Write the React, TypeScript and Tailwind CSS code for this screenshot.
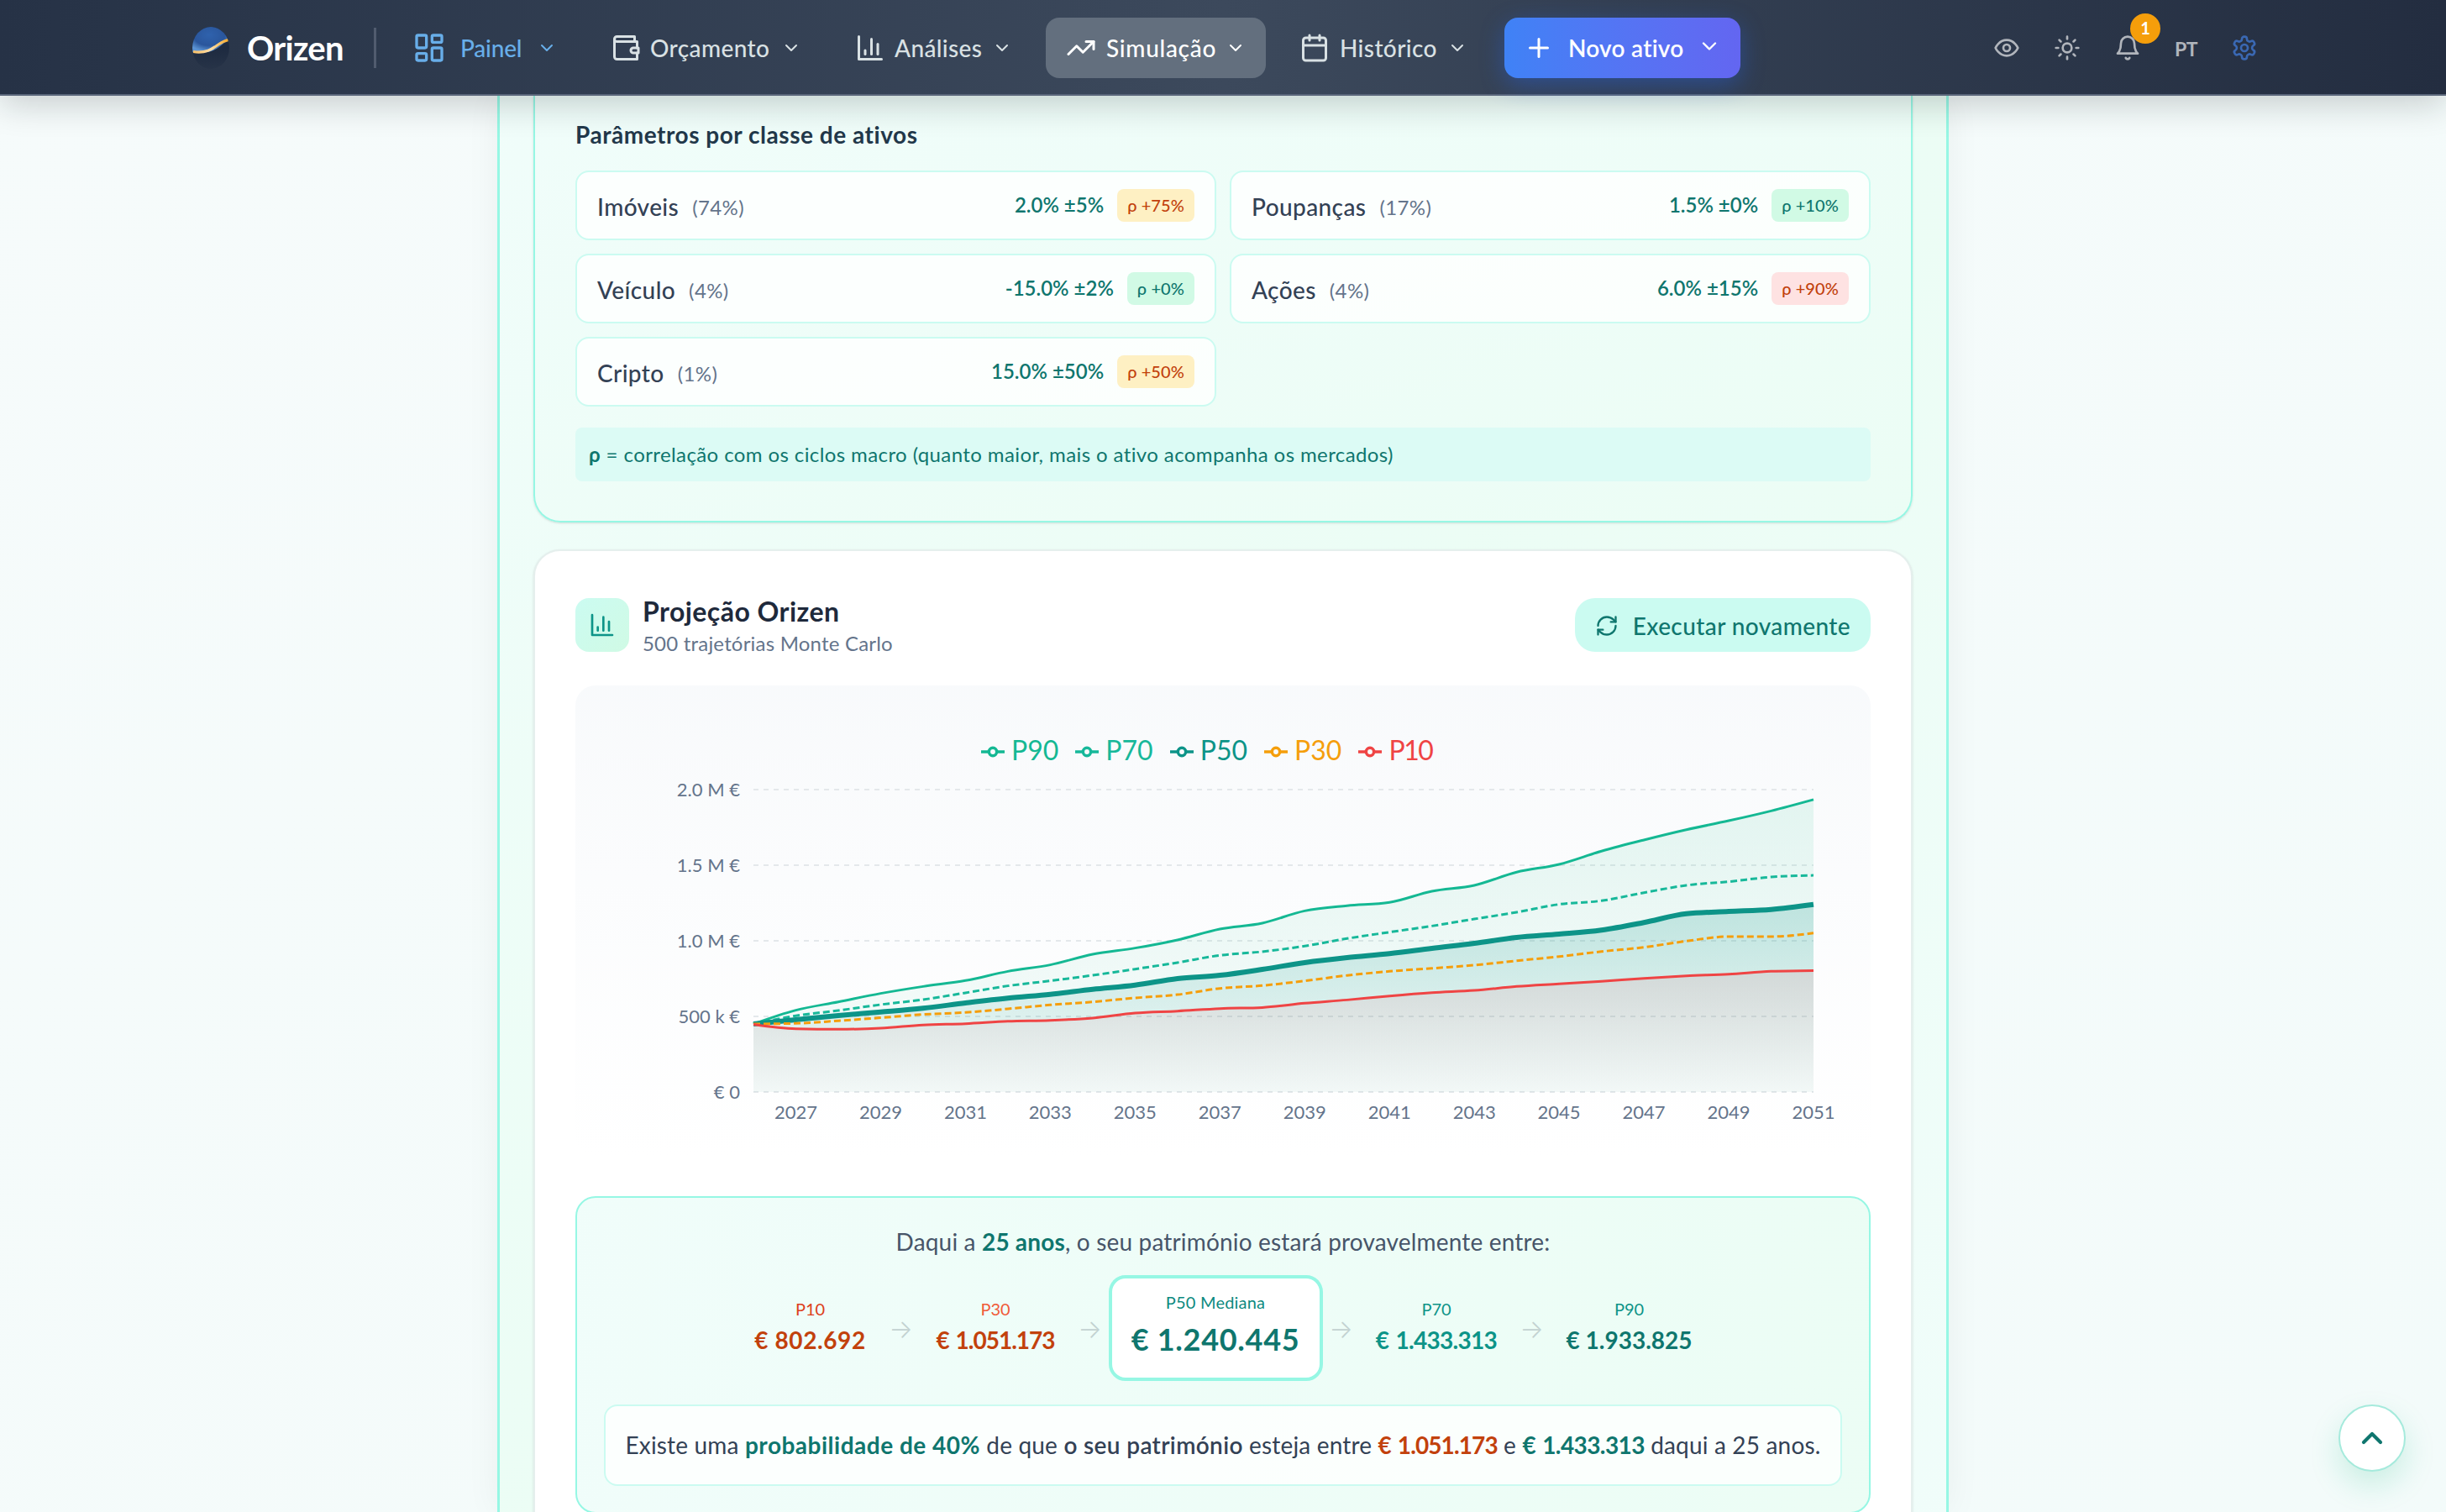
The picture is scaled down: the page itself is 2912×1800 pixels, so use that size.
import type { ReactNode } from 'react';
import { Calendar, ChevronDown, ChevronUp, LayoutDashboard, Plus, RefreshCw, Sun, TrendingUp } from 'lucide-react';

const YEARS = 25;
const PLOT = { left: 212, right: 1474, top: 20, bottom: 380 };

// Values in thousands of euros, one per year from 2026 to 2051
const SERIES = {
  p90: [450, 541, 596, 652, 698, 737, 798, 841, 911, 952, 1006, 1078, 1117, 1198, 1232, 1254, 1328, 1367, 1454, 1506, 1593, 1667, 1735, 1794, 1859, 1934],
  p70: [450, 504, 539, 578, 611, 656, 702, 735, 772, 813, 856, 904, 928, 965, 1015, 1057, 1098, 1144, 1189, 1241, 1265, 1318, 1367, 1391, 1422, 1433],
  p50: [450, 478, 506, 529, 554, 589, 621, 646, 679, 707, 750, 772, 811, 856, 889, 915, 950, 983, 1022, 1044, 1071, 1121, 1179, 1194, 1207, 1240],
  p30: [450, 454, 471, 491, 513, 526, 550, 576, 596, 622, 644, 685, 704, 735, 771, 798, 818, 839, 868, 896, 929, 957, 998, 1028, 1028, 1051],
  p10: [447, 418, 415, 422, 443, 452, 468, 474, 489, 522, 535, 552, 559, 587, 609, 635, 657, 672, 698, 715, 732, 752, 768, 779, 798, 803],
};

const LEGEND = [
  { label: 'P90', color: '#14b893' },
  { label: 'P70', color: '#17b89a' },
  { label: 'P50', color: '#0d9488' },
  { label: 'P30', color: '#f59e0b' },
  { label: 'P10', color: '#ef4444' },
];

const ASSETS = [
  { name: 'Imóveis', share: '74%', ret: '2.0% ±5%', rho: '+75%', tone: 'mid' },
  { name: 'Poupanças', share: '17%', ret: '1.5% ±0%', rho: '+10%', tone: 'low' },
  { name: 'Veículo', share: '4%', ret: '-15.0% ±2%', rho: '+0%', tone: 'low' },
  { name: 'Ações', share: '4%', ret: '6.0% ±15%', rho: '+90%', tone: 'high' },
  { name: 'Cripto', share: '1%', ret: '15.0% ±50%', rho: '+50%', tone: 'mid' },
];

const TONES: Record<string, string> = {
  low: 'bg-[#d1fae5] text-[#0f766e]',
  mid: 'bg-[#fef0c3] text-[#c2410c]',
  high: 'bg-[#fee2e2] text-[#c2410c]',
};

const px = (i: number) => PLOT.left + ((PLOT.right - PLOT.left) / YEARS) * i;
const py = (v: number) => PLOT.bottom - v * 0.18;

// Monotone cubic interpolation, tangents limited so the curve never overshoots
function curve(values: number[]) {
  const p = values.map((v, i) => [px(i), py(v)]);
  const h = p[1][0] - p[0][0];
  const s = p.slice(1).map((q, i) => (q[1] - p[i][1]) / h);
  const t = p.map((_, i) => {
    if (i === 0 || i === p.length - 1) return 0;
    const a = s[i - 1];
    const b = s[i];
    return (Math.sign(a) + Math.sign(b)) * Math.min(Math.abs(a), Math.abs(b), Math.abs(a + b) / 4) || 0;
  });
  t[0] = (3 * s[0] - t[1]) / 2;
  t[p.length - 1] = (3 * s[s.length - 1] - t[p.length - 2]) / 2;
  let d = `M${p[0][0]},${p[0][1]}`;
  for (let i = 1; i < p.length; i++) {
    d += `C${p[i - 1][0] + h / 3},${p[i - 1][1] + (t[i - 1] * h) / 3} ${p[i][0] - h / 3},${p[i][1] - (t[i] * h) / 3} ${p[i][0]},${p[i][1]}`;
  }
  return d;
}

const area = (values: number[]) => `${curve(values)}L${PLOT.right},${PLOT.bottom}L${PLOT.left},${PLOT.bottom}Z`;

function Icon({ className, children }: { className?: string; children: ReactNode }) {
  return (
    <svg viewBox="0 0 24 24" fill="none" stroke="currentColor" strokeWidth={2} strokeLinecap="round" strokeLinejoin="round" className={className}>
      {children}
    </svg>
  );
}

function BarsIcon({ className }: { className?: string }) {
  return (
    <Icon className={className}>
      <path d="M3 3v18h18" />
      <path d="M18 17V9" />
      <path d="M13 17V5" />
      <path d="M8 17v-3" />
    </Icon>
  );
}

function WalletIcon({ className }: { className?: string }) {
  return (
    <Icon className={className}>
      <path d="M21 12V7H5a2 2 0 0 1 0-4h14v4" />
      <path d="M3 5v14a2 2 0 0 0 2 2h16v-5" />
      <path d="M18 12a2 2 0 0 0 0 4h4v-4Z" />
    </Icon>
  );
}

function Logo() {
  return (
    <svg viewBox="0 0 48 54" className="h-[54px] w-12">
      <defs>
        <radialGradient id="sky" cx="0.5" cy="0.35" r="0.6">
          <stop offset="0" stopColor="#2f62ad" />
          <stop offset="0.65" stopColor="#2a569c" />
          <stop offset="1" stopColor="#5b93d3" />
        </radialGradient>
        <linearGradient id="sea" x1="0" y1="0" x2="0" y2="1">
          <stop offset="0.5" stopColor="#1d2a40" />
          <stop offset="1" stopColor="#1d2a40" stopOpacity="0.15" />
        </linearGradient>
        <linearGradient id="dawn" x1="0" y1="0" x2="1" y2="0">
          <stop offset="0" stopColor="#f9c067" />
          <stop offset="0.5" stopColor="#fddca6" />
          <stop offset="1" stopColor="#f5a623" />
        </linearGradient>
        <clipPath id="globe"><ellipse cx="26" cy="27" rx="22" ry="25" /></clipPath>
      </defs>
      <g clipPath="url(#globe)">
        <rect width="48" height="54" fill="url(#sea)" />
        <path d="M0 0H48V17C40 21 35 30 22 32C14 33.500 8 33 0 31Z" fill="url(#sky)" />
        <path d="M5 31.500C20 34 28 28 35 23C40 19.500 43 18 48 17" fill="none" stroke="url(#dawn)" strokeWidth="3.200" />
      </g>
    </svg>
  );
}

function NavItem({ icon, label, className }: { icon: ReactNode; label: string; className: string }) {
  return (
    <button className={`flex h-[72px] items-center rounded-2xl px-6 text-[28px] font-medium ${className}`}>
      {icon}
      <span className="flex-1 text-left whitespace-nowrap">{label}</span>
      <ChevronDown className="size-6" />
    </button>
  );
}

function Header() {
  return (
    <header className="relative z-10 flex h-[114px] items-center border-b-2 border-[#5a667a] bg-linear-to-r from-[#263246] via-[#3c495c] to-[#232d40] pt-0.5 pr-[208px] pl-[225px] shadow-[0_10px_40px_rgba(15,23,32,0.2)]">
      <Logo />
      <span className="ml-[21px] w-[115px] text-[40px] font-bold tracking-[-0.7px] text-white">Orizen</span>
      <div className="ml-9 h-12 w-[3px] bg-[#515c6f]" />
      <nav className="ml-[19px] flex items-center">
        <NavItem icon={<LayoutDashboard className="mr-[17px] size-10" />} label="Painel" className="w-[220px] tracking-[-0.2px] text-[#68aee9]" />
        <NavItem icon={<WalletIcon className="mr-[11px] size-9" />} label="Orçamento" className="ml-4 w-[275px] tracking-[0.4px] text-[#d9e1e4]" />
        <NavItem icon={<BarsIcon className="mr-[11px] size-9" />} label="Análises" className="ml-4 w-[235px] tracking-[0.35px] text-[#d9e1e4]" />
        <NavItem icon={<TrendingUp className="mr-3 size-9" />} label="Simulação" className="ml-4 w-[262px] bg-[#636f7e] tracking-[0.7px] text-white" />
        <NavItem icon={<Calendar className="mr-3 size-9" />} label="Histórico" className="ml-4 w-[248px] tracking-[0.4px] text-[#d9e1e4]" />
      </nav>
      <button className="ml-5 flex h-[72px] w-[281px] items-center rounded-2xl bg-linear-to-r from-[#3f82f6] to-[#6366f1] px-[23px] text-[28px] font-semibold tracking-[0.25px] text-white shadow-[0_8px_28px_rgba(37,99,235,0.4)]">
        <Plus className="mr-[17px] size-9" />
        <span className="flex-1 text-left whitespace-nowrap">Novo ativo</span>
        <ChevronDown className="mb-1 size-7" />
      </button>
      <div className="ml-auto flex items-center gap-2 text-[#b1b5bc]">
        <button className="flex size-16 items-center justify-center">
          <Icon className="size-8">
            <path d="M2 12s3-7 10-7 10 7 10 7-3 7-10 7-10-7-10-7Z" />
            <circle cx="12" cy="12" r="3" />
          </Icon>
        </button>
        <button className="flex size-16 items-center justify-center"><Sun className="size-8" /></button>
        <button className="relative flex size-16 items-center justify-center">
          <Icon className="size-8">
            <path d="M6 8a6 6 0 0 1 12 0c0 7 3 9 3 9H3s3-2 3-9" />
            <path d="M10.300 21a1.940 1.940 0 0 0 3.400 0" />
          </Icon>
          <span className="absolute -top-[9px] left-[35px] flex size-9 items-center justify-center rounded-full bg-[#f59e0b] pb-0.5 text-[20px] font-bold text-white">1</span>
        </button>
        <button className="flex h-16 w-[59px] items-center justify-center pt-0.5 text-[23px] font-bold tracking-[-0.5px]">PT</button>
        <button className="flex size-16 items-center justify-center text-[#3a68b3]">
          <Icon className="size-8">
            <path d="M12.220 2h-.440a2 2 0 0 0-2 2v.180a2 2 0 0 1-1 1.730l-.430.250a2 2 0 0 1-2 0l-.150-.080a2 2 0 0 0-2.730.730l-.220.380a2 2 0 0 0 .730 2.730l.150.100a2 2 0 0 1 1 1.720v.510a2 2 0 0 1-1 1.740l-.150.090a2 2 0 0 0-.730 2.730l.220.380a2 2 0 0 0 2.730.730l.150-.080a2 2 0 0 1 2 0l.430.250a2 2 0 0 1 1 1.730V20a2 2 0 0 0 2 2h.440a2 2 0 0 0 2-2v-.180a2 2 0 0 1 1-1.730l.430-.250a2 2 0 0 1 2 0l.150.080a2 2 0 0 0 2.730-.730l.220-.390a2 2 0 0 0-.730-2.730l-.150-.080a2 2 0 0 1-1-1.740v-.500a2 2 0 0 1 1-1.740l.150-.090a2 2 0 0 0 .730-2.730l-.220-.380a2 2 0 0 0-2.730-.730l-.150.080a2 2 0 0 1-2 0l-.430-.250a2 2 0 0 1-1-1.730V4a2 2 0 0 0-2-2z" />
            <circle cx="12" cy="12" r="3" />
          </Icon>
        </button>
      </div>
    </header>
  );
}

function AssetParams() {
  return (
    <section className="h-[508px] rounded-b-[32px] border-2 border-t-0 border-teal-200 bg-linear-to-br from-teal-50 to-emerald-50 px-12 pt-[26px] shadow-sm">
      <h3 className="h-10 text-[28px] leading-10 font-bold tracking-[0.53px] text-[#22384a]">Parâmetros por classe de ativos</h3>
      <div className="mt-[23px] grid grid-cols-2 gap-4">
        {ASSETS.map(a => (
          <div key={a.name} className="flex h-[83px] items-center rounded-2xl border-2 border-teal-100 bg-white/80 px-6">
            <span className="mt-0.5 text-[28px] font-medium tracking-[0.4px] text-[#334155]">{a.name}</span>
            <span className="mt-1 ml-4 text-[24px] tracking-[0.4px] text-[#64748b]">({a.share})</span>
            <span className="ml-auto pb-0.5 text-[24px] font-semibold text-[#0f766e]">{a.ret}</span>
            <span className={`ml-4 flex h-[39px] items-center rounded-lg px-3 pb-0.5 text-[20px] font-medium tracking-[0.1px] ${TONES[a.tone]}`}>ρ {a.rho}</span>
          </div>
        ))}
      </div>
      <p className="mt-[25px] flex h-16 items-center rounded-lg bg-[#dcfbf5] px-4 text-[24px] tracking-[0.4px] whitespace-pre text-[#0f766e]">
        <strong>ρ</strong> = correlação com os ciclos macro (quanto maior, mais o ativo acompanha os mercados)
      </p>
    </section>
  );
}

function ProjectionChart() {
  return (
    <div className="mt-8 h-[560px] rounded-3xl bg-linear-to-b from-slate-50 to-white">
      <div className="flex h-[104px] items-end gap-5 pl-[483px] text-[32px] leading-[54px]">
        {LEGEND.map(l => (
          <div key={l.label} className="flex items-center gap-2" style={{ color: l.color }}>
            <svg viewBox="0 0 32 32" className="mt-1 size-7" fill="none" stroke="currentColor" strokeWidth={4}>
              <path d="M0,16h10.667A5.333,5.333,0,1,1,21.333,16H32M21.333,16A5.333,5.333,0,1,1,10.667,16" />
            </svg>
            <span className={l.label === 'P10' ? 'tracking-[-1.400px]' : ''}>{l.label}</span>
          </div>
        ))}
      </div>
      <svg viewBox="0 0 1542 440" className="h-[440px] w-full" fontFamily="Lato, sans-serif" fontSize="22">
        <defs>
          <linearGradient id="g90" x1="0" y1="0" x2="0" y2="1">
            <stop offset="0" stopColor="#10b981" stopOpacity="0.1" />
            <stop offset="1" stopColor="#10b981" stopOpacity="0.02" />
          </linearGradient>
          <linearGradient id="g50" x1="0" y1="0" x2="0" y2="1">
            <stop offset="0" stopColor="#0d9488" stopOpacity="0.2" />
            <stop offset="1" stopColor="#0d9488" stopOpacity="0.03" />
          </linearGradient>
          <linearGradient id="g10" x1="0" y1="0" x2="0" y2="1">
            <stop offset="0" stopColor="#e8445a" stopOpacity="0.11" />
            <stop offset="1" stopColor="#e8445a" stopOpacity="0.01" />
          </linearGradient>
        </defs>
        {['2.0 M €', '1.5 M €', '1.0 M €', '500 k €', '€ 0'].map((label, i) => (
          <g key={label}>
            <line x1={PLOT.left} x2={PLOT.right} y1={20 + i * 90} y2={20 + i * 90} stroke="#e4e8eb" strokeWidth="2" strokeDasharray="6 6" />
            <text x="196" y={28 + i * 90} textAnchor="end" fill="#64748b">{label}</text>
          </g>
        ))}
        <path d={area(SERIES.p90)} fill="url(#g90)" />
        <path d={area(SERIES.p50)} fill="url(#g50)" />
        <path d={area(SERIES.p10)} fill="url(#g10)" />
        <g fill="none">
          <path d={curve(SERIES.p90)} stroke="#14b893" strokeWidth="3" />
          <path d={curve(SERIES.p70)} stroke="#17b89a" strokeWidth="3" strokeDasharray="8 4" />
          <path d={curve(SERIES.p50)} stroke="#0d9488" strokeWidth="6" />
          <path d={curve(SERIES.p30)} stroke="#f59e0b" strokeWidth="3" strokeDasharray="8 4" />
          <path d={curve(SERIES.p10)} stroke="#ef4444" strokeWidth="3" />
        </g>
        {Array.from({ length: 13 }, (_, i) => (
          <text key={i} x={px(1 + i * 2)} y="412" textAnchor="middle" fill="#64748b">{2027 + i * 2}</text>
        ))}
      </svg>
    </div>
  );
}

function Percentile({ label, value, labelClass, valueClass }: { label: string; value: string; labelClass: string; valueClass: string }) {
  return (
    <div className="pb-[3px] text-center whitespace-nowrap">
      <div className={`text-[20px] leading-7 ${labelClass}`}>{label}</div>
      <div className={`mt-[3px] text-[28px] leading-10 font-bold ${valueClass}`}>{value}</div>
    </div>
  );
}

function Arrow() {
  return <span className="flex w-6 justify-center pt-0.5 font-['Inter'] text-[30px] leading-none font-light text-[#c3d2d1]">→</span>;
}

function Summary() {
  return (
    <div className="mt-12 h-[378px] rounded-3xl border-2 border-teal-200 bg-linear-to-r from-teal-50 to-emerald-50 px-8 pt-8">
      <p className="text-center text-[28px] leading-10 tracking-[0.17px] text-[#475569]">
        Daqui a <strong className="text-[#0f766e]">25 anos</strong>, o seu património estará provavelmente entre:
      </p>
      <div className="mt-5 flex h-[126px] items-center justify-center gap-2.5">
        <Percentile label="P10" value="€ 802.692" labelClass="text-[#dd3f20]" valueClass="w-[172px] tracking-[0.6px] text-[#c2410c]" />
        <Arrow />
        <Percentile label="P30" value="€ 1.051.173" labelClass="text-[#f05a38]" valueClass="w-[181px] tracking-[-1px] [word-spacing:2px] text-[#c2410c]" />
        <Arrow />
        <div className="h-[126px] w-[255px] rounded-[20px] border-4 border-teal-200 bg-white pt-3.5 text-center whitespace-nowrap">
          <div className="text-[20px] leading-7 tracking-[0.2px] text-[#0d8a80]">P50 Mediana</div>
          <div className="mt-[7px] text-[36px] leading-[46px] font-bold tracking-[0.7px] text-[#0f766e]">€ 1.240.445</div>
        </div>
        <Arrow />
        <Percentile label="P70" value="€ 1.433.313" labelClass="text-[#0d9488]" valueClass="w-[183px] tracking-[-0.700px] [word-spacing:2px] text-[#0d9488]" />
        <Arrow />
        <Percentile label="P90" value="€ 1.933.825" labelClass="text-[#0d9488]" valueClass="w-[188px] text-[#0f766e]" />
      </div>
      <p className="mt-7 flex h-[97px] items-center justify-center rounded-2xl border-2 border-teal-100 bg-white/80 pb-0.5 text-[28px] tracking-[0.17px] whitespace-pre text-[#334155]">
        Existe uma <strong className="tracking-[0.5px] text-[#0f766e]">probabilidade de 40%</strong> de que <span className="font-semibold tracking-[0.35px]">o seu património</span> esteja entre <strong className="tracking-[-0.9px] [word-spacing:2px] text-[#c2410c]">€ 1.051.173</strong> e <strong className="tracking-[-0.6px] [word-spacing:2px] text-[#0f766e]">€ 1.433.313</strong> daqui a 25 anos.
      </p>
    </div>
  );
}

export default function App() {
  return (
    <div className="relative h-[1800px] w-full overflow-hidden bg-linear-to-br from-[#f6fbfb] to-[#f3fbfa] font-['Lato',sans-serif] [font-variant-ligatures:none]">
      <Header />
      <main className="mx-auto h-[1686px] w-[1728px] border-x-[3px] border-teal-200 bg-linear-to-br from-teal-50 via-emerald-50 to-teal-50 px-10 shadow-[0_0_40px_rgba(15,23,42,0.05)]">
        <AssetParams />
        <section className="mt-8 h-[1240px] rounded-[32px] border-2 border-[#e5efed] bg-white px-12 pt-12 shadow-sm">
          <div className="flex h-20 items-center">
            <div className="flex size-16 items-center justify-center rounded-2xl bg-linear-to-br from-teal-100 to-emerald-100">
              <BarsIcon className="size-8 text-[#0d9488]" />
            </div>
            <div className="ml-4 pt-1">
              <h3 className="text-[32px] leading-10 font-bold tracking-[0.45px] text-[#1e293b]">Projeção Orizen</h3>
              <p className="text-[24px] leading-9 tracking-[0.2px] text-[#64748b]">500 trajetórias Monte Carlo</p>
            </div>
            <button className="ml-auto flex h-16 items-center gap-[17px] rounded-3xl bg-teal-100 px-6 pt-0.5 text-[28px] font-medium tracking-[0.4px] text-[#0f766e]">
              <RefreshCw className="size-7" />
              Executar novamente
            </button>
          </div>
          <ProjectionChart />
          <Summary />
        </section>
      </main>
      <button className="absolute right-12 bottom-12 flex size-20 items-center justify-center rounded-full border-2 border-[#a5eadc] bg-white text-[#0f766e] shadow-[0_16px_36px_rgba(16,185,129,0.18)]">
        <ChevronUp className="size-10" strokeWidth={2.5} />
      </button>
    </div>
  );
}
